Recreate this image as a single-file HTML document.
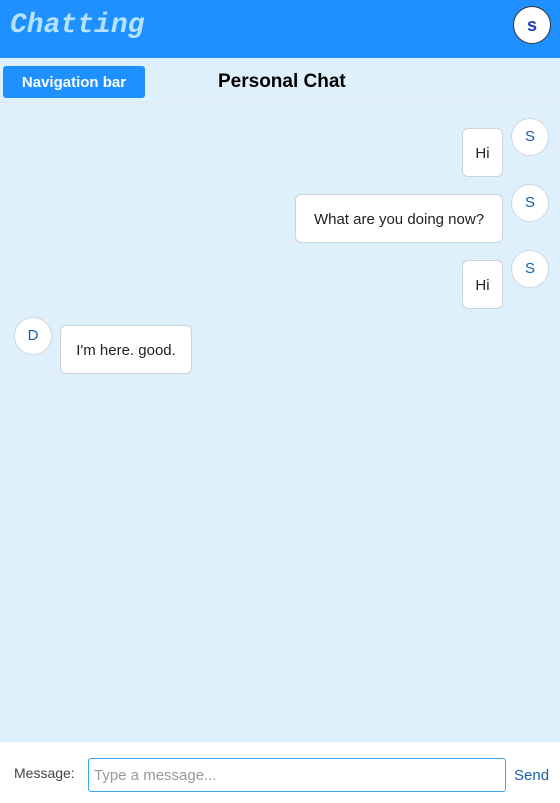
<!DOCTYPE html>
<html><head><meta charset="utf-8"><style>
*{box-sizing:border-box;margin:0;padding:0}
body{width:560px;height:803px;overflow:hidden;font-family:"Liberation Sans",sans-serif;background:#fff;position:relative}
.hdr{position:absolute;left:0;top:0;width:560px;height:58px;background:#1e90ff}
.title{position:absolute;left:10px;top:10px;font-family:"Liberation Mono",monospace;font-style:italic;font-size:28px;color:#b5e3ff;font-weight:bold}
.me{position:absolute;left:513px;top:6px;width:38px;height:38px;border-radius:50%;background:#fff;border:1px solid #333;color:#2040c0;font-weight:bold;font-size:18px;text-align:center;line-height:36px}
.sub{position:absolute;left:0;top:58px;width:560px;height:45px;background:#dff0fd;border-bottom:1px solid #e3e6ea}
.nav{position:absolute;left:3px;top:8px;width:142px;height:32px;background:#1e90ff;border-radius:3px;color:#fff;font-weight:bold;font-size:15px;text-align:center;line-height:33px}
.pc{position:absolute;left:218px;top:13px;font-weight:bold;font-size:19px;color:#000}
.chat{position:absolute;left:0;top:103px;width:560px;height:639px;background:#dff0fd}
.av{position:absolute;width:38px;height:38px;border-radius:50%;background:#fff;border:1px solid #cfd6e0;color:#1a5ea8;font-size:15px;text-align:center;line-height:36px}
.b{position:absolute;height:49px;background:#fff;border:1px solid #cdd3dd;border-radius:6px;font-size:15px;color:#222;line-height:49px;text-align:center}
.lbl{position:absolute;left:14px;top:765px;font-size:14px;color:#444}
.ta{position:absolute;left:88px;top:758px;width:418px;height:34px;border:1px solid #3aa8f0;border-radius:3px;font-size:15px;color:#999;padding:8px 5px}
.send{position:absolute;left:514px;top:767px;font-size:15px;color:#1a5ea8}
</style></head><body>
<div class="hdr"><div class="title">Chatting</div><div class="me">s</div></div>
<div class="sub"><div class="nav">Navigation bar</div><div class="pc">Personal Chat</div></div>
<div class="chat"></div>
<div class="av" style="left:511px;top:118px">S</div>
<div class="b" style="left:462px;top:128px;width:41px">Hi</div>
<div class="av" style="left:511px;top:184px">S</div>
<div class="b" style="left:295px;top:194px;width:208px">What are you doing now?</div>
<div class="av" style="left:511px;top:250px">S</div>
<div class="b" style="left:462px;top:260px;width:41px">Hi</div>
<div class="av" style="left:14px;top:317px">D</div>
<div class="b" style="left:60px;top:325px;width:132px">I'm here. good.</div>
<div class="lbl">Message:</div>
<div class="ta">Type a message...</div>
<div class="send">Send</div>
</body></html>
